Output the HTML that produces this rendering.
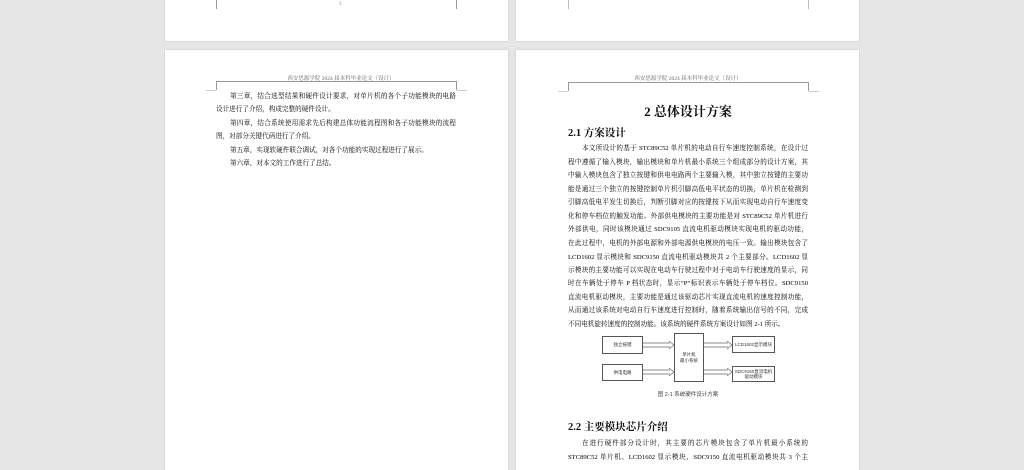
<!DOCTYPE html>
<html><head><meta charset="utf-8"><style>
*{margin:0;padding:0;box-sizing:border-box}
body{width:1024px;height:465px;background:#e6e6e6;position:relative;overflow:hidden;font-family:"Liberation Serif","Noto Serif CJK SC","Noto Sans CJK SC",serif;color:#111}
.pg{position:absolute;background:#fff;box-shadow:0 0 2px rgba(0,0,0,.15)}
.a{position:absolute;white-space:nowrap}
.ln{position:absolute;background:#999}
.t{position:absolute;font-size:6.6px;white-space:nowrap;width:240px;text-align:justify;text-align-last:justify;height:11px;line-height:11px;color:#000}
.t.i{width:226px}
.t.s{text-align-last:left}
.hd{position:absolute;font-size:5.5px;color:#666;white-space:nowrap;transform:translateX(-50%)}
.box{position:absolute;border:1px solid #555;font-size:4.5px;font-family:"Liberation Sans","Noto Sans CJK SC",sans-serif;display:flex;align-items:center;justify-content:center;text-align:center;line-height:1.2;color:#333;white-space:nowrap}
</style></head><body>
<div class="pg" style="left:165px;top:0;width:343px;height:41px"></div>
<div class="pg" style="left:516px;top:0;width:343px;height:41px"></div>
<div class="pg" style="left:165px;top:50px;width:343px;height:420px"></div>
<div class="pg" style="left:516px;top:50px;width:343px;height:420px"></div>

<div class="ln" style="left:216px;top:0;width:1px;height:9px"></div>
<div class="ln" style="left:456px;top:0;width:1px;height:9px"></div>
<div class="a" style="left:339px;top:2px;font-size:5px;color:#888">3</div>
<div class="ln" style="left:568px;top:0;width:1px;height:9px;background:#bbb"></div>
<div class="ln" style="left:808px;top:0;width:1px;height:9px;background:#bbb"></div>

<div class="hd" style="left:341px;top:74px">西安思源学院 2024 届本科毕业论文（设计）</div>
<div class="ln" style="left:216px;top:81px;width:241px;height:1px"></div>
<div class="ln" style="left:216px;top:81px;width:1px;height:9px"></div>
<div class="ln" style="left:456px;top:81px;width:1px;height:9px"></div>
<div class="ln" style="left:206px;top:90px;width:10px;height:1px;background:#ccc"></div>
<div class="ln" style="left:457px;top:90px;width:10px;height:1px;background:#ccc"></div>
<div class="t i" style="left:230px;top:91px">第三章，结合选型结果和硬件设计要求，对单片机的各个子功能模块的电路</div>
<div class="t s" style="left:216px;top:104px">设计进行了介绍，构成完整的硬件设计。</div>
<div class="t i" style="left:230px;top:118px">第四章，结合系统使用需求先后构建总体功能流程图和各子功能模块的流程</div>
<div class="t s" style="left:216px;top:131px">图，对部分关键代码进行了介绍。</div>
<div class="t s" style="left:230px;top:145px">第五章，实现软硬件联合调试，对各个功能的实现过程进行了展示。</div>
<div class="t s" style="left:230px;top:158px">第六章，对本文的工作进行了总结。</div>

<div class="hd" style="left:688px;top:74px">西安思源学院 2024 届本科毕业论文（设计）</div>
<div class="ln" style="left:568px;top:82px;width:241px;height:1px"></div>
<div class="ln" style="left:568px;top:82px;width:1px;height:9px"></div>
<div class="ln" style="left:808px;top:82px;width:1px;height:9px"></div>
<div class="ln" style="left:558px;top:91px;width:10px;height:1px;background:#ccc"></div>
<div class="ln" style="left:809px;top:91px;width:10px;height:1px;background:#ccc"></div>
<div class="a" style="left:688px;top:101px;transform:translateX(-50%);font-size:13px;font-weight:bold">2 总体设计方案</div>
<div class="a" style="left:568px;top:125px;font-size:10.5px;font-weight:bold">2.1 方案设计</div>
<div class="t i" style="left:582px;top:143px">本文所设计的基于 STC89C52 单片机的电动自行车速度控制系统，在设计过</div>
<div class="t" style="left:568px;top:157px">程中遵循了输入模块，输出模块和单片机最小系统三个组成部分的设计方案，其</div>
<div class="t" style="left:568px;top:170px">中输入模块包含了独立按键和供电电路两个主要输入模，其中独立按键的主要功</div>
<div class="t" style="left:568px;top:184px">能是通过三个独立的按键控制单片机引脚高低电平状态的切换，单片机在检测到</div>
<div class="t" style="left:568px;top:197px">引脚高低电平发生切换后，判断引脚对应的按键按下从而实现电动自行车速度变</div>
<div class="t" style="left:568px;top:211px">化和停车档位的触发功能。外部供电模块的主要功能是对 STC89C52 单片机进行</div>
<div class="t" style="left:568px;top:224px">外部供电，同时该模块通过 SDC9105 直流电机驱动模块实现电机的驱动功能，</div>
<div class="t" style="left:568px;top:238px">在此过程中，电机的外部电源和外部电源供电模块的电压一致。输出模块包含了</div>
<div class="t" style="left:568px;top:252px">LCD1602 显示模块和 SDC9150 直流电机驱动模块共 2 个主要部分。LCD1602 显</div>
<div class="t" style="left:568px;top:265px">示模块的主要功能可以实现在电动车行驶过程中对于电动车行驶速度的显示，同</div>
<div class="t" style="left:568px;top:278px">时在车辆处于停车 P 档状态时，显示“P”标识表示车辆处于停车档位。SDC9150</div>
<div class="t" style="left:568px;top:292px">直流电机驱动模块，主要功能是通过该驱动芯片实现直流电机的速度控制功能，</div>
<div class="t" style="left:568px;top:305px">从而通过该系统对电动自行车速度进行控制时，随着系统输出信号的不同，完成</div>
<div class="t s" style="left:568px;top:319px">不同电机旋转速度的控制功能。该系统的硬件系统方案设计如图 2-1 所示。</div>

<div class="box" style="left:602px;top:336px;width:41px;height:18px">独立按键</div>
<div class="box" style="left:602px;top:364px;width:41px;height:17px">供电电路</div>
<div class="box" style="left:674px;top:333px;width:30px;height:49px">单片机<br>最小系统</div>
<div class="box" style="left:732px;top:336px;width:43px;height:17px">LCD1602显示模块</div>
<div class="box" style="left:732px;top:366px;width:43px;height:16px">SDC9150直流电机<br>驱动模块</div>
<svg style="position:absolute;left:0;top:0" width="1024" height="465" fill="none" stroke="#666" stroke-width="0.7">
<path d="M643 343H670M643 347H670M669 341L674 345L669 349"/>
<path d="M643 370H670M643 374H670M669 368L674 372L669 376"/>
<path d="M704 343H728M704 347H728M727 341L732 345L727 349"/>
<path d="M704 370H728M704 374H728M727 368L732 372L727 376"/>
</svg>
<div class="a" style="left:688px;top:390px;transform:translateX(-50%);font-size:5.5px;font-family:'Liberation Sans','Noto Sans CJK SC',sans-serif;color:#444">图 2-1 系统硬件设计方案</div>

<div class="a" style="left:568px;top:419px;font-size:10.5px;font-weight:bold">2.2 主要模块芯片介绍</div>
<div class="t i" style="left:582px;top:438px">在进行硬件部分设计时，其主要的芯片模块包含了单片机最小系统的</div>
<div class="t" style="left:568px;top:452px">STC89C52 单片机、LCD1602 显示模块、SDC9150 直流电机驱动模块共 3 个主</div>
</body></html>
